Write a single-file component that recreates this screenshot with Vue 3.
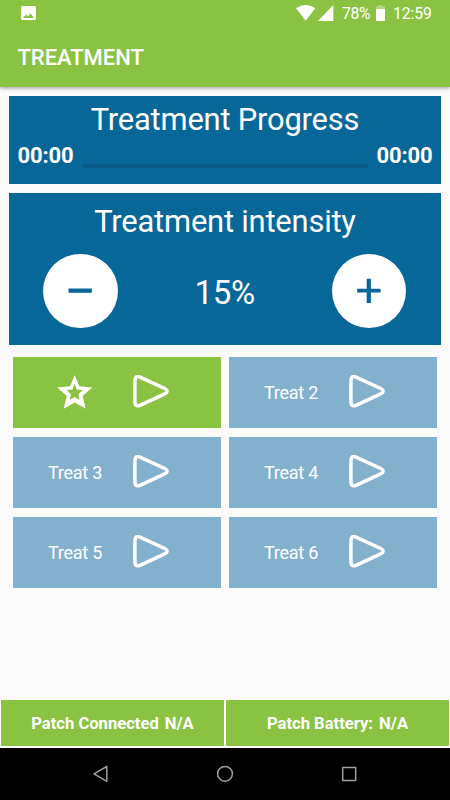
<template>
  <div class="screen">
    <header class="app-header">
      <div class="status-bar">
        <svg class="image-icon" width="15" height="15" viewBox="0 0 15 15">
          <path fill="#fff" fill-rule="evenodd" d="M1.5 0h12A1.5 1.5 0 0 1 15 1.5v11a1.5 1.5 0 0 1-1.5 1.5h-12A1.5 1.5 0 0 1 0 12.5v-11A1.5 1.5 0 0 1 1.5 0zM2 12h11L9.5 7.3 7 10.5 5 8.5z" />
        </svg>
        <div class="status-right">
          <svg class="wifi-icon" width="20" height="16" viewBox="0 0 20 16">
            <path fill="#fff" d="M0 3.2Q9.5-3.2 19.3 3.2L9.7 15.7z" />
          </svg>
          <svg class="signal-icon" width="16" height="16" viewBox="0 0 16 16">
            <path fill="#fff" d="M15.3 0v16H0z" />
          </svg>
          <span class="battery-level">78%</span>
          <svg class="battery-icon" width="9" height="16" viewBox="0 0 9 16">
            <path fill="#fff" fill-opacity=".35" d="M2.5 0h4v1.5H9V4H0V1.5h2.5z" />
            <path fill="#fff" d="M0 4h9v12H0z" />
          </svg>
          <span class="clock">12:59</span>
        </div>
      </div>
      <h1 class="app-title">TREATMENT</h1>
    </header>

    <main class="content">
      <section class="panel progress-panel">
        <h2 class="panel-title">Treatment Progress</h2>
        <div class="progress-row">
          <span class="time">{{ elapsed }}</span>
          <div class="track"></div>
          <span class="time">{{ remaining }}</span>
        </div>
      </section>

      <section class="panel intensity-panel">
        <h2 class="panel-title intensity-title">Treatment intensity</h2>
        <div class="intensity-row">
          <button class="round-button" aria-label="Decrease" @click="changeIntensity(-5)">
            <svg width="74" height="74" viewBox="0 0 74 74">
              <path fill="#086799" d="M25.5 34.5h23.3v4.3H25.5z" />
            </svg>
          </button>
          <span class="intensity-value">{{ intensity }}%</span>
          <button class="round-button" aria-label="Increase" @click="changeIntensity(5)">
            <svg width="74" height="74" viewBox="0 0 74 74">
              <path fill="#086799" d="M25.2 34.7H34.7V24.7H38.9v10h9.7v3.9H38.9v10.5h-4.2V38.6H25.2z" />
            </svg>
          </button>
        </div>
      </section>

      <div class="treatments">
        <button
          v-for="item in treatments"
          :key="item.id"
          class="treatment"
          :class="{ active: item.id === selected }"
          @click="selected = item.id"
        >
          <span class="treatment-label">
            <svg v-if="item.favourite" class="star-icon" width="36" height="36" viewBox="0 0 36 36">
              <path fill="#fff" fill-rule="evenodd" d="M17.7 0l4.5 11.3 13.1 1.2-9.7 8.6 3.1 12.6-11-6.3-11 6.3 3.1-12.6L.2 12.5l13-1.2zM17.7 8.8l-2.2 5.6-5.9.7 4.4 4.2-1.2 5.6 4.9-3 4.9 3-1.2-5.6 4.4-4.2-5.9-.7z" />
            </svg>
            <template v-else>{{ item.name }}</template>
          </span>
          <svg class="play-icon" width="38" height="34" viewBox="0 0 38 34">
            <path fill="none" stroke="#fff" stroke-width="3.5" d="M2.9 5.4v21.6q0 5 4.6 3.5L33.2 18.7q3.9-2.5 0-5L7.5 1.9Q2.9.4 2.9 5.4z" />
          </svg>
        </button>
      </div>
    </main>

    <footer class="patch-bar">
      <div class="patch-cell">Patch Connected <span>N/A</span></div>
      <div class="patch-cell">Patch Battery: <span>N/A</span></div>
    </footer>

    <nav class="nav-bar">
      <svg width="450" height="52" viewBox="0 0 450 52" fill="none" stroke="#a0a0a0" stroke-width="1.5">
        <path stroke-linejoin="round" d="M106.8 18.5v14.8L94 25.9z" />
        <circle cx="225" cy="25.8" r="7.4" />
        <path stroke-linejoin="round" d="M342.7 19.4h13v13h-13z" />
      </svg>
    </nav>
  </div>
</template>

<script setup>
import { ref } from 'vue';

const elapsed = ref('00:00');
const remaining = ref('00:00');
const intensity = ref(15);
const selected = ref(1);

const treatments = [
  { id: 1, name: 'Treat 1', favourite: true },
  { id: 2, name: 'Treat 2' },
  { id: 3, name: 'Treat 3' },
  { id: 4, name: 'Treat 4' },
  { id: 5, name: 'Treat 5' },
  { id: 6, name: 'Treat 6' }
];

const changeIntensity = (step) => {
  intensity.value = Math.min(100, Math.max(0, intensity.value + step));
};
</script>

<style>
body {
  margin: 0;
  background: #fafafa;
}
</style>

<style scoped>
.screen {
  display: flex;
  flex-direction: column;
  width: 450px;
  height: 800px;
  overflow: hidden;
  background: #fafafa;
  color: #fff;
  font-family: Roboto, "Liberation Sans", sans-serif;
}

.screen * {
  box-sizing: border-box;
}

svg {
  display: block;
  flex-shrink: 0;
}

button {
  border: 0;
  padding: 0;
  color: inherit;
  font-family: inherit;
}

.app-header {
  height: 87px;
  flex-shrink: 0;
  background: #8ac342;
  box-shadow: 0 1px 4px rgba(0, 0, 0, 0.4);
}

.status-bar {
  display: flex;
  justify-content: space-between;
  height: 28px;
  padding: 0 17px 0 21px;
}

.image-icon {
  margin-top: 6px;
}

.status-right {
  display: flex;
  align-items: flex-start;
  padding-top: 5px;
  font-size: 15.8px;
  line-height: 18px;
}

.signal-icon {
  margin-left: 2px;
}

.battery-level {
  width: 29px;
  margin-left: 8px;
  letter-spacing: -0.4px;
}

.battery-icon {
  margin-left: 5px;
}

.clock {
  width: 40px;
  margin-left: 8px;
  letter-spacing: -0.1px;
}

.app-title {
  margin: 16px 0 0 17.5px;
  font-size: 22px;
  font-weight: 500;
  line-height: 28px;
  letter-spacing: -0.05px;
}

.content {
  flex: 1;
  padding: 9.4px 9px 0;
}

.panel {
  background: #086799;
}

.progress-panel {
  height: 87.2px;
}

.intensity-panel {
  height: 152.7px;
  margin-top: 9.1px;
}

.panel-title {
  margin: 0;
  padding-top: 6px;
  font-size: 30.9px;
  font-weight: 400;
  line-height: 36px;
  letter-spacing: -0.2px;
  text-align: center;
}

.intensity-title {
  padding-top: 11px;
}

.progress-row {
  display: flex;
  align-items: center;
  justify-content: space-between;
  padding: 4px 8.5px 0;
}

.time {
  font-size: 22px;
  font-weight: 700;
  line-height: 28px;
  letter-spacing: -0.15px;
}

.track {
  width: 285px;
  height: 4px;
  margin-top: 19px;
  background: #075a83;
}

.intensity-row {
  display: flex;
  align-items: center;
  justify-content: space-between;
  padding: 14px 35px 0 34.2px;
}

.round-button {
  width: 74.4px;
  height: 74.4px;
  border-radius: 50%;
  background: #fff;
}

.intensity-value {
  padding-top: 4px;
  font-size: 33px;
  line-height: 38px;
  letter-spacing: -0.3px;
}

.treatments {
  display: grid;
  grid-template-columns: 1fr 1fr;
  gap: 9px 8px;
  padding: 11.3px 4px 0;
}

.treatment {
  display: flex;
  align-items: center;
  height: 71px;
  padding-left: 26px;
  background: #83b1cd;
}

.treatment.active {
  background: #8ac342;
}

.treatment-label {
  display: flex;
  justify-content: center;
  width: 72px;
  padding-top: 2px;
  font-size: 18px;
  line-height: 22px;
  letter-spacing: -0.25px;
}

.play-icon {
  margin: 0 0 0.6px 21px;
}

.patch-bar {
  display: grid;
  grid-template-columns: 1fr 1fr;
  gap: 2px;
  height: 49px;
  flex-shrink: 0;
  padding: 0.5px 1px 2px;
  background: #fff;
}

.patch-cell {
  display: flex;
  align-items: center;
  justify-content: center;
  gap: 6px;
  padding-top: 1px;
  background: #8ac342;
  font-size: 16.6px;
  font-weight: 700;
}

.nav-bar {
  height: 52px;
  flex-shrink: 0;
  background: #000;
}
</style>
